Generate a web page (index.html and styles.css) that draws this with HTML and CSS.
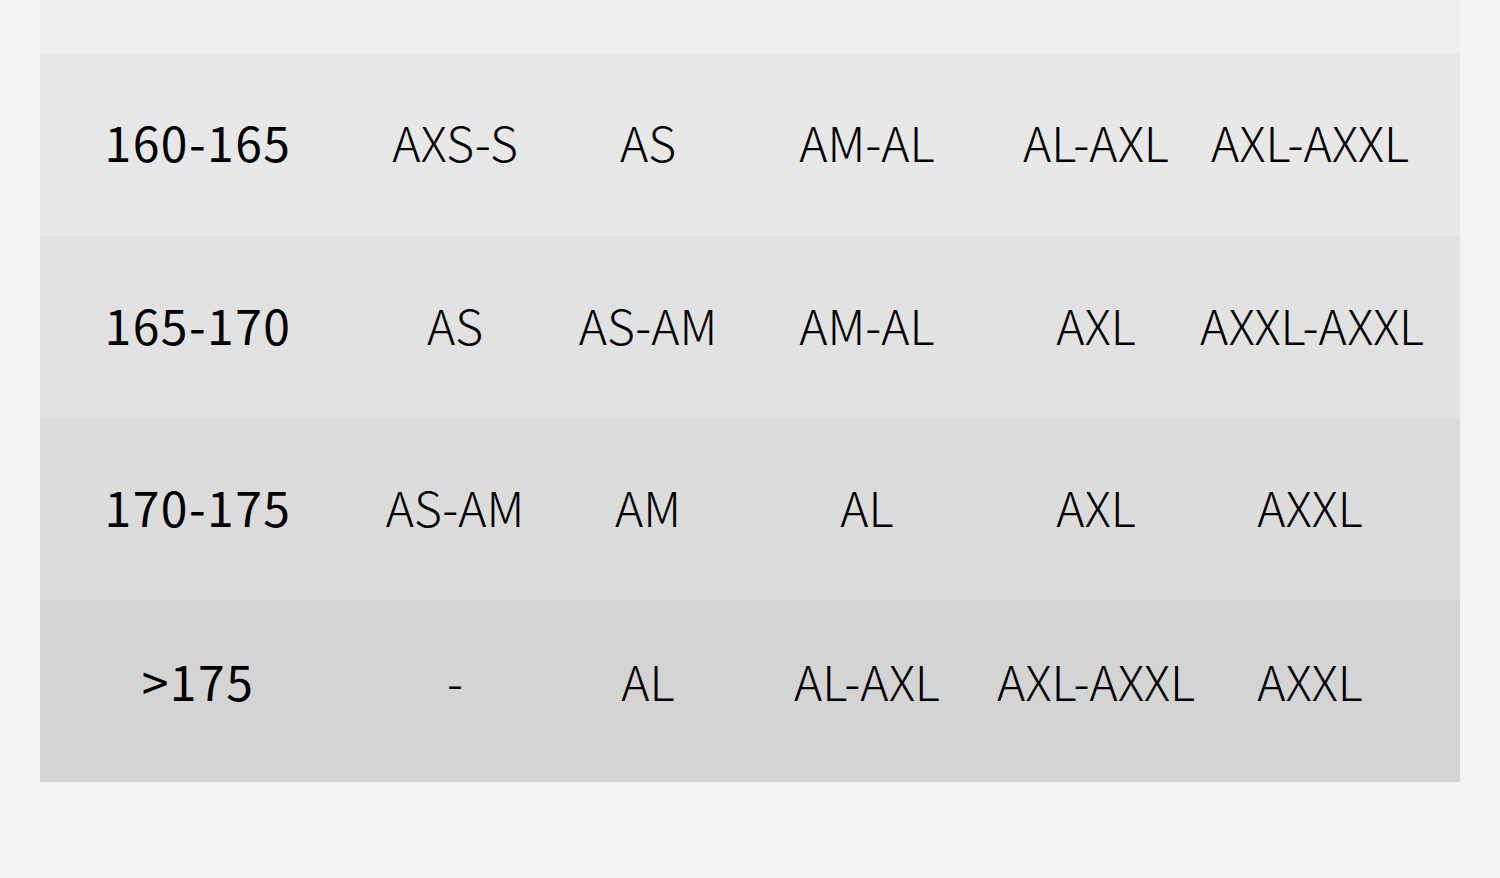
FILE: index.html
```html
<!DOCTYPE html>
<html lang="zh">
<head>
<meta charset="utf-8">
<title>Size chart</title>
<link rel="stylesheet" href="styles.css">
</head>
<body>
<div class="page">
  <div class="table">
    <div class="row row-0"></div>
    <div class="row row-1">
      <div class="cell head">160-165</div>
      <div class="cell">AXS-S</div>
      <div class="cell">AS</div>
      <div class="cell">AM-AL</div>
      <div class="cell">AL-AXL</div>
      <div class="cell">AXL-AXXL</div>
    </div>
    <div class="row row-2">
      <div class="cell head">165-170</div>
      <div class="cell">AS</div>
      <div class="cell">AS-AM</div>
      <div class="cell">AM-AL</div>
      <div class="cell">AXL</div>
      <div class="cell">AXXL-AXXL</div>
    </div>
    <div class="row row-3">
      <div class="cell head">170-175</div>
      <div class="cell">AS-AM</div>
      <div class="cell">AM</div>
      <div class="cell">AL</div>
      <div class="cell">AXL</div>
      <div class="cell">AXXL</div>
    </div>
    <div class="row row-4">
      <div class="cell head">&gt;175</div>
      <div class="cell">-</div>
      <div class="cell">AL</div>
      <div class="cell">AL-AXL</div>
      <div class="cell">AXL-AXXL</div>
      <div class="cell">AXXL</div>
    </div>
  </div>
</div>
</body>
</html>
```

FILE: styles.css
```css
html, body {
  margin: 0;
  padding: 0;
  background: #f4f4f4;
}
body {
  font-family: "Noto Sans CJK SC", "Noto Sans", sans-serif;
  color: #000;
}
.page {
  width: 1500px;
  height: 878px;
  padding: 0 40px;
  box-sizing: border-box;
}
.table {
  display: flex;
  flex-direction: column;
}
.row {
  display: grid;
  grid-template-columns: 316px 198px 188px 250px 208px 220px;
  padding-right: 40px;
  padding-bottom: 7px;
  height: 182px;
  box-sizing: border-box;
  align-items: center;
}
.row-0 { height: 53px; padding-bottom: 0; background: #eeeeee; }
.row-1 { height: 183px; background: #e8e8e8; }
.row-2 { background: #e2e2e2; }
.row-3 { background: #dcdcdc; }
.row-4 { height: 182px; padding-bottom: 22px; background: #d5d4d5; }
.cell {
  text-align: center;
  font-size: 48px;
  font-weight: 300;
  line-height: 1;
  white-space: nowrap;
}
.head {
  font-weight: 400;
  letter-spacing: 1.5px;
}
```
